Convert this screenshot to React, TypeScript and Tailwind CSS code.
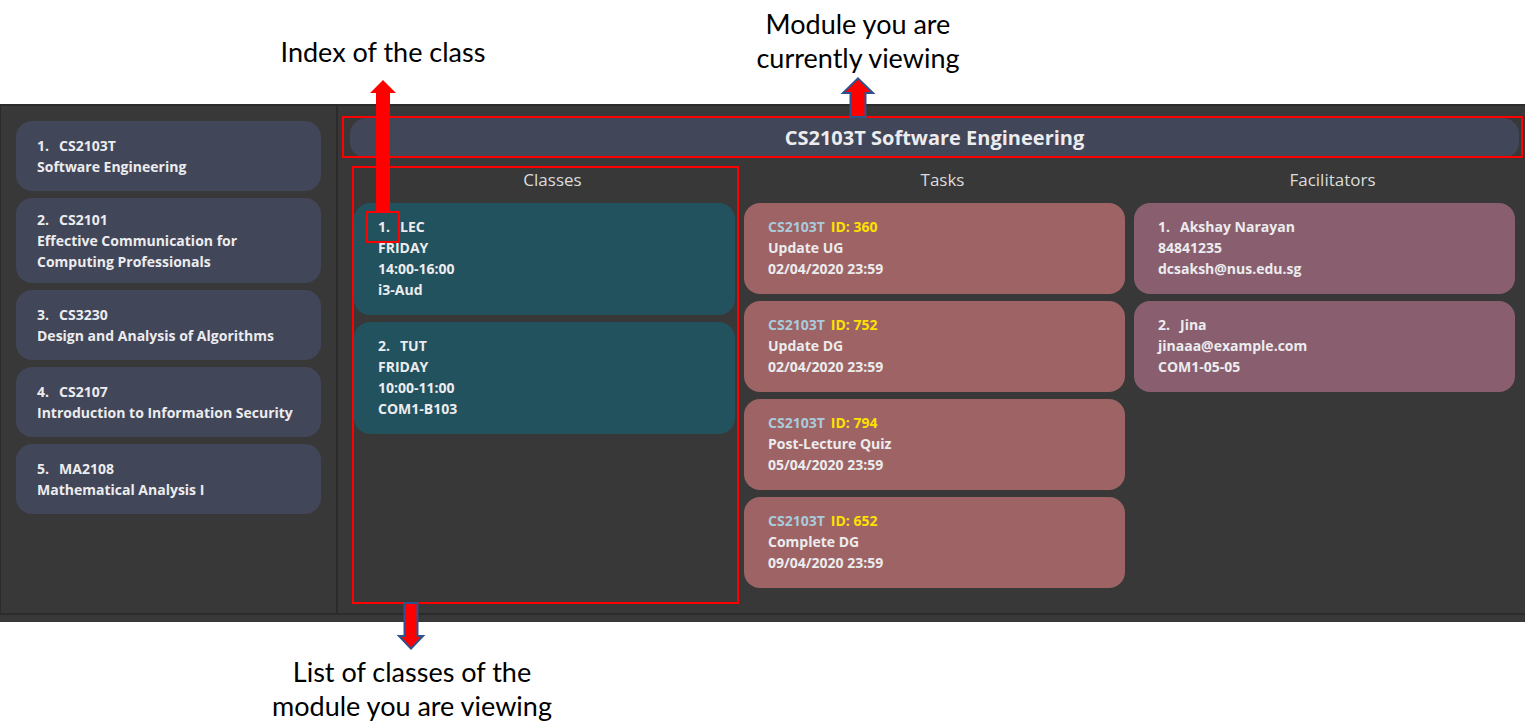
import type { ReactNode } from "react";

type Item = { title: string; lines: string[] };
type Task = { id: string; lines: string[] };

const modules: Item[] = [
  { title: "CS2103T", lines: ["Software Engineering"] },
  { title: "CS2101", lines: ["Effective Communication for Computing Professionals"] },
  { title: "CS3230", lines: ["Design and Analysis of Algorithms"] },
  { title: "CS2107", lines: ["Introduction to Information Security"] },
  { title: "MA2108", lines: ["Mathematical Analysis I"] },
];

const classes: Item[] = [
  { title: "LEC", lines: ["FRIDAY", "14:00-16:00", "i3-Aud"] },
  { title: "TUT", lines: ["FRIDAY", "10:00-11:00", "COM1-B103"] },
];

const tasks: Task[] = [
  { id: "360", lines: ["Update UG", "02/04/2020 23:59"] },
  { id: "752", lines: ["Update DG", "02/04/2020 23:59"] },
  { id: "794", lines: ["Post-Lecture Quiz", "05/04/2020 23:59"] },
  { id: "652", lines: ["Complete DG", "09/04/2020 23:59"] },
];

const facilitators: Item[] = [
  { title: "Akshay Narayan", lines: ["84841235", "dcsaksh@nus.edu.sg"] },
  { title: "Jina", lines: ["jinaaa@example.com", "COM1-05-05"] },
];

function ItemText({ item, index }: { item: Item; index: number }) {
  return (
    <>
      <p className="flex gap-2.5">
        <span>{index + 1}.</span>
        <span>{item.title}</span>
      </p>
      {item.lines.map((line) => (
        <p key={line}>{line}</p>
      ))}
    </>
  );
}

function Column({ title, children, overlay }: { title: string; children: ReactNode; overlay?: ReactNode }) {
  return (
    <section className="relative flex min-w-0 flex-1 flex-col">
      <h2 className="pl-4 text-center text-[17px] leading-7 font-normal text-[#dcdcdc]">{title}</h2>
      <ul className="flex flex-col gap-[7px] pt-[9px]">{children}</ul>
      {overlay}
    </section>
  );
}

function IndexMark() {
  return (
    <div className="absolute top-2 left-3 h-8 w-[34px] border-2 border-[#ff0000]">
      <svg className="absolute bottom-full left-0.5 h-[133px] w-[26px]" viewBox="0 0 26 133" aria-hidden="true">
        <path d="M13 0 26 13H20V133H6V13H0Z" fill="#ff0000" />
      </svg>
    </div>
  );
}

function ModuleMark() {
  return (
    <div className="pointer-events-none absolute -top-0.5 -right-1 bottom-0 -left-2 border-2 border-[#ff0000]">
      <svg className="absolute -top-[41px] left-[496px] h-[41px] w-[36px]" viewBox="0 0 36 41" aria-hidden="true">
        <path d="M18 1.4 33 16H25.5V40H10.5V16H3Z" fill="#ff0000" stroke="#2f528f" strokeWidth="2" />
      </svg>
    </div>
  );
}

function ClassesMark() {
  return (
    <div className="pointer-events-none absolute inset-y-0 -right-1 -left-0.5 border-2 border-[#ff0000]">
      <svg className="absolute top-full left-[42px] h-[48px] w-[30px]" viewBox="0 0 30 48" aria-hidden="true">
        <path d="M8.5 1H21.5V34H27L15 46.6 3 34H8.5Z" fill="#ff0000" stroke="#2f528f" strokeWidth="2" />
      </svg>
    </div>
  );
}

export default function App() {
  return (
    <main className="bg-white font-['Open_Sans','Noto_Sans',sans-serif]">
      <header className="flex h-[104px] items-start text-center font-['Lato',sans-serif] text-[27px] leading-[34px] text-black">
        <p className="ml-[252px] w-[262px] pt-[35px]">Index of the class</p>
        <p className="ml-[228px] w-[232px] pt-[7px]">Module you are currently viewing</p>
      </header>

      <div className="border-b-[7px] border-[#383838] bg-[#383838]">
        <div className="flex min-h-[511px] border-y-2 border-l border-[#2b2b2b] text-sm leading-[21px] font-bold text-[#ececee]">
          <nav className="w-[337px] shrink-0 border-r-2 border-[#2b2b2b] pt-[15px] pr-[15px] pl-[15px]">
            <ul className="flex flex-col gap-[7px]">
              {modules.map((item, i) => (
                <li
                  key={item.title}
                  className="flex min-h-[70px] flex-col justify-center rounded-2xl bg-[#424659] px-[21px] py-[11px]"
                >
                  <ItemText item={item} index={i} />
                </li>
              ))}
            </ul>
          </nav>

          <div className="flex min-w-0 flex-1 flex-col pt-3 pr-1.5 pb-[9px] pl-3">
            <div className="relative">
              <h1 className="rounded-2xl bg-[#424659] text-center text-xl leading-10 font-bold">
                CS2103T Software Engineering
              </h1>
              <ModuleMark />
            </div>
            <div className="flex flex-1 gap-[9px] pt-2 pr-1 pl-1">
              <Column title="Classes" overlay={<ClassesMark />}>
                {classes.map((item, i) => (
                  <li key={item.title} className="relative rounded-2xl bg-[#23525f] px-6 pt-[13px] pb-[15px]">
                    <ItemText item={item} index={i} />
                    {i === 0 && <IndexMark />}
                  </li>
                ))}
              </Column>
              <Column title="Tasks">
                {tasks.map((task) => (
                  <li key={task.id} className="rounded-2xl bg-[#9e6465] px-6 pt-[13px] pb-[15px]">
                    <p className="flex gap-1.5">
                      <span className="text-[#a9cbdc]">CS2103T</span>
                      <span className="text-[#ffe100]">ID: {task.id}</span>
                    </p>
                    {task.lines.map((line) => (
                      <p key={line}>{line}</p>
                    ))}
                  </li>
                ))}
              </Column>
              <Column title="Facilitators">
                {facilitators.map((item, i) => (
                  <li key={item.title} className="rounded-2xl bg-[#895f6f] px-6 pt-[13px] pb-[15px]">
                    <ItemText item={item} index={i} />
                  </li>
                ))}
              </Column>
            </div>
          </div>
        </div>
      </div>

      <footer className="pt-[33px] text-center font-['Lato',sans-serif] text-[27px] leading-[34px] text-black">
        <p className="ml-[262px] w-[300px]">List of classes of the module you are viewing</p>
      </footer>
    </main>
  );
}
